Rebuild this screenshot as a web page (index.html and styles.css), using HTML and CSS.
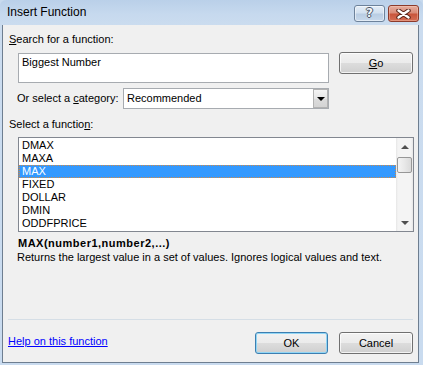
FILE: index.html
```html
<!DOCTYPE html>
<html>
<head>
    <meta charset="UTF-8">
    <title>Insert Function</title>
    <link rel="stylesheet" href="styles.css">
</head>
<body>
    <div class="window">
        <div class="titlebar">
            <span class="title">Insert Function</span>
            <div class="caption-buttons">
                <span class="cap-btn help">?</span>
                <span class="cap-btn close">
                    <svg width="15" height="10" viewBox="0 0 15 10">
                        <path d="M2.5 1.5 L12.5 8.5 M12.5 1.5 L2.5 8.5" stroke="#5a2418" stroke-width="4.4" stroke-linecap="round"/>
                        <path d="M2.5 1.5 L12.5 8.5 M12.5 1.5 L2.5 8.5" stroke="#ffffff" stroke-width="2.4" stroke-linecap="round"/>
                    </svg>
                </span>
            </div>
        </div>

        <div class="client">
            <div class="label search-label"><u>S</u>earch for a function:</div>

            <div class="search-row">
                <div class="textbox">Biggest Number</div>
                <button class="btn go"><u>G</u>o</button>
            </div>

            <div class="category-row">
                <span class="label category-label">Or select a <u>c</u>ategory:</span>
                <div class="combo">
                    <span class="combo-text">Recommended</span>
                    <span class="combo-arrow"><span class="tri-down"></span></span>
                </div>
            </div>

            <div class="label select-label">Select a functio<u>n</u>:</div>

            <div class="listbox">
                <ul class="items">
                    <li>DMAX</li>
                    <li>MAXA</li>
                    <li class="selected">MAX</li>
                    <li>FIXED</li>
                    <li>DOLLAR</li>
                    <li>DMIN</li>
                    <li>ODDFPRICE</li>
                </ul>
                <div class="scrollbar">
                    <div class="sb-btn"><span class="sb-up"></span></div>
                    <div class="sb-thumb"></div>
                    <div class="sb-track"></div>
                    <div class="sb-btn"><span class="sb-down"></span></div>
                </div>
            </div>

            <div class="signature">MAX(number1,number2,...)</div>
            <div class="description">Returns the largest value in a set of values. Ignores logical values and text.</div>

            <div class="footer">
                <div class="separator"></div>
                <div class="footer-row">
                    <a class="help-link" href="#">Help on this function</a>
                    <div class="footer-buttons">
                        <button class="btn default ok">OK</button>
                        <button class="btn cancel">Cancel</button>
                    </div>
                </div>
            </div>
        </div>
    </div>
</body>
</html>
```

FILE: styles.css
```css
* {
    box-sizing: border-box;
}

body {
    margin: 0;
    width: 423px;
    height: 365px;
    overflow: hidden;
    font-family: "Liberation Sans", Arial, sans-serif;
    font-size: 11px;
    color: #000;
    background: #c8daee;
}

.window {
    height: 365px;
    display: flex;
    flex-direction: column;
    background: linear-gradient(#bad0e9 0, #c6d9ee 14px, #cbdcef 25px, #c9dbef 100%);
    border-radius: 6px 6px 0 0;
}

/* title bar */
.titlebar {
    height: 25px;
    flex: none;
    display: flex;
    align-items: flex-start;
    padding: 0 4px 0 7px;
}

.title {
    font-size: 12px;
    line-height: 15px;
    padding-top: 5px;
}

.caption-buttons {
    margin-left: auto;
    display: flex;
    gap: 3px;
    padding-top: 5px;
}

.cap-btn {
    width: 31px;
    height: 17px;
    border-radius: 3px;
    display: flex;
    align-items: center;
    justify-content: center;
}

.help {
    border: 1px solid #6d829b;
    background: linear-gradient(#e4edf7 0%, #d3e1f0 45%, #b9cde3 55%, #c8d9ec 100%);
    box-shadow: inset 0 0 0 1px rgba(255,255,255,0.5);
    font-family: "DejaVu Sans", sans-serif;
    font-weight: bold;
    font-size: 12px;
    line-height: 15px;
    color: #f2f5f8;
    text-shadow: 1px 0 #4a5565, -1px 0 #4a5565, 0 1px #4a5565, 0 -1px #4a5565;
}

.close {
    border: 1px solid #8c3a2b;
    background: linear-gradient(#e6ad9f 0%, #d98b78 45%, #c9553c 55%, #d56e55 100%);
    box-shadow: inset 0 0 0 1px rgba(255,220,200,0.35);
}

/* client area */
.client {
    flex: 1;
    margin: 0 4px 2px 2px;
    border: 1px solid #6e7e90;
    border-top: none;
    background: #f0f0f0;
    display: flex;
    flex-direction: column;
}

.label {
    line-height: 13px;
}

.search-label {
    margin: 8px 0 0 6px;
}

.search-row {
    display: flex;
    align-items: flex-start;
    margin-top: 7px;
}

.textbox {
    margin-left: 15px;
    width: 311px;
    height: 30px;
    border: 1px solid #a7abb0;
    background: #fff;
    padding: 2px 3px;
    line-height: 13px;
}

.btn {
    font-family: inherit;
    font-size: 11px;
    color: #000;
    padding: 0;
    height: 22px;
    border: 1px solid #707070;
    border-radius: 3px;
    background: linear-gradient(#f2f2f2 0%, #ebebeb 49%, #dddddd 50%, #cfcfcf 100%);
    box-shadow: inset 0 0 0 1px rgba(255,255,255,0.75);
}

.go {
    margin: -1px 0 0 10px;
    width: 74px;
}

.category-row {
    display: flex;
    align-items: center;
    margin-top: 5px;
}

.category-label {
    width: 106px;
    margin-left: 14px;
}

.combo {
    width: 206px;
    height: 21px;
    border: 1px solid #a7abb0;
    background: #fff;
    display: flex;
}

.combo-text {
    flex: 1;
    padding-left: 3px;
    line-height: 19px;
}

.combo-arrow {
    width: 15px;
    height: 19px;
    border: 1px solid #b2b2b2;
    background: linear-gradient(#f4f4f4, #e6e6e6 50%, #dcdcdc 51%, #d4d4d4);
    display: flex;
    align-items: center;
    justify-content: center;
}

.tri-down {
    width: 0;
    height: 0;
    border-left: 4px solid transparent;
    border-right: 4px solid transparent;
    border-top: 4px solid #000;
}

.select-label {
    margin: 9px 0 0 6px;
}

/* function list */
.listbox {
    margin: 6px 0 0 15px;
    width: 396px;
    height: 95px;
    border: 1px solid #828790;
    background: #fff;
    display: flex;
}

.items {
    flex: 1;
    list-style: none;
    margin: 0;
    padding: 1px 0 0 0;
    overflow: hidden;
}

.items li {
    height: 13px;
    line-height: 13px;
    padding-left: 3px;
}

.items li.selected {
    background: #3399ff;
    color: #fff;
    outline: 1px dotted #d08a48;
    outline-offset: -1px;
}

.scrollbar {
    width: 17px;
    display: flex;
    flex-direction: column;
    background: linear-gradient(90deg, #e6e6e6 0, #f4f4f4 2px, #f4f4f4 15px, #e6e6e6 17px);
}

.sb-btn {
    height: 17px;
    display: flex;
    align-items: center;
    justify-content: center;
}

.sb-up {
    border-left: 4px solid transparent;
    border-right: 4px solid transparent;
    border-bottom: 4px solid #505050;
}

.sb-down {
    border-left: 4px solid transparent;
    border-right: 4px solid transparent;
    border-top: 4px solid #505050;
}

.sb-thumb {
    margin: 2px 1px 0 1px;
    height: 16px;
    border: 1px solid #979797;
    border-radius: 2px;
    background: linear-gradient(90deg, #f4f4f4, #e8e8e8 50%, #dadada);
}

.sb-track {
    flex: 1;
}

.signature {
    margin: 5px 0 0 15px;
    font-weight: bold;
    line-height: 13px;
    letter-spacing: 0.5px;
}

.description {
    margin: 1px 0 0 14px;
    line-height: 13px;
}

/* bottom part */
.footer {
    margin-top: auto;
    padding: 0 5px 8px 5px;
}

.separator {
    height: 1px;
    background: #d5dee6;
}

.footer-row {
    display: flex;
    align-items: flex-start;
    margin-top: 12px;
}

.help-link {
    margin-top: 3px;
    line-height: 13px;
    color: #0000ff;
}

.footer-buttons {
    margin-left: auto;
    display: flex;
    gap: 11px;
}

.ok {
    width: 73px;
}

.cancel {
    width: 74px;
}

.btn.default {
    border-color: #3c7fb1;
    box-shadow: inset 0 0 0 1px #92d6f5;
}
```
